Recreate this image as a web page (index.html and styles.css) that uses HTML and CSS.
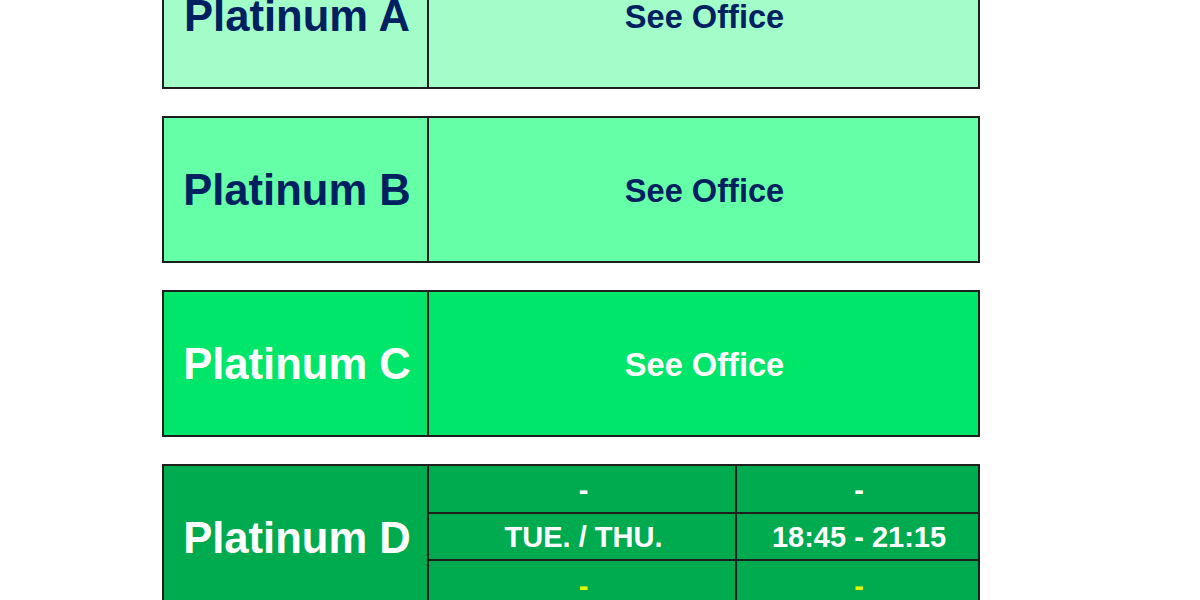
FILE: index.html
```html
<!DOCTYPE html>
<html>
<head>
<meta charset="utf-8">
<link rel="stylesheet" href="styles.css">
</head>
<body>
<div class="stack">
  <div class="block tier-a">
    <div class="name">Platinum A</div>
    <div class="info">See Office</div>
  </div>
  <div class="block tier-b">
    <div class="name">Platinum B</div>
    <div class="info">See Office</div>
  </div>
  <div class="block tier-c">
    <div class="name">Platinum C</div>
    <div class="info">See Office</div>
  </div>
  <div class="block tier-d">
    <div class="name">Platinum D</div>
    <div class="sched">
      <div class="cell">-</div>
      <div class="cell">-</div>
      <div class="cell">TUE. / THU.</div>
      <div class="cell">18:45 - 21:15</div>
      <div class="cell hl">-</div>
      <div class="cell hl">-</div>
    </div>
  </div>
</div>
</body>
</html>
```
FILE: styles.css
```css
html, body {
  margin: 0;
  padding: 0;
  background: #ffffff;
  font-family: "Liberation Sans", Arial, sans-serif;
  font-weight: bold;
}
.stack {
  display: flex;
  flex-direction: column;
  gap: 27px;
  margin-top: -58px;
  margin-left: 162px;
  width: 818px;
}
.block {
  display: grid;
  grid-template-columns: 265px 1fr;
  height: 147px;
  border: 2px solid #1e1e1e;
  box-sizing: border-box;
}
.name {
  display: flex;
  align-items: center;
  justify-content: center;
  padding-top: 2px;
  padding-left: 3px;
  font-size: 43.6px;
  border-right: 2px solid #1e1e1e;
}
.info {
  display: flex;
  align-items: center;
  justify-content: center;
  padding-top: 2px;
  padding-left: 2px;
  font-size: 32.6px;
}
.tier-a { background: #a3fdc9; color: #002060; }
.tier-b { background: #64ffa7; color: #002060; }
.tier-c { background: #00e66b; color: #ffffff; }
.tier-d { background: #00ab4f; color: #ffffff; }
.sched {
  display: grid;
  grid-template-columns: 308px 1fr;
  grid-template-rows: repeat(3, 1fr);
}
.cell {
  display: flex;
  align-items: center;
  justify-content: center;
  padding-top: 3px;
  padding-left: 3px;
  font-size: 29px;
  border-bottom: 2px solid #1e1e1e;
}
.cell:nth-child(odd) {
  border-right: 2px solid #1e1e1e;
}
.cell:nth-last-child(-n+2) {
  border-bottom: none;
}
.cell.hl { color: #e4f700; }
```
